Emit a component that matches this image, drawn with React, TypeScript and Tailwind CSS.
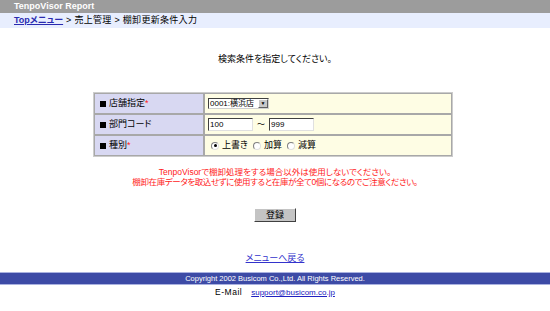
import { useState } from "react";

const jp = "font-['Liberation_Sans','Noto_Sans_CJK_JP',sans-serif] [font-feature-settings:'palt']";

function Radio({ checked, onClick }: { checked: boolean; onClick: () => void }) {
    return (
        <span onClick={onClick} className="w-[8px] h-[8px] rounded-full border border-t-[#808080] border-l-[#808080] border-r-[#e0e0e0] border-b-[#e0e0e0] bg-white flex items-center justify-center cursor-pointer">
            {checked && <span className="w-[3px] h-[3px] rounded-full bg-black" />}
        </span>
    );
}

export default function App() {
    const [mode, setMode] = useState(0);
    const modes = ["上書き", "加算", "減算"];

    return (
        <div className={`w-[550px] h-[311px] bg-white text-black ${jp}`}>
            <div className="h-[13px] bg-[#9c9c9c] pl-[14px] text-white font-bold text-[9px] leading-[13px]">TenpoVisor Report</div>
            <div className="h-[15px] bg-[#e8eefe] pl-[14px] text-[9px] leading-[15px] flex gap-[3px]">
                <a href="#" className="text-[#2a2ab0] underline font-bold">Topメニュー</a>
                <span className="tracking-[0.3px]">&gt; 売上管理 &gt; 棚卸更新条件入力</span>
            </div>

            <p className="mt-[26px] text-center text-[9px] leading-[10px]">検索条件を指定してください。</p>

            <div className="mt-[28px] ml-[93px] w-[360px] border border-[#cccccc] bg-[#a8a8a8] grid grid-cols-[108px_1fr] gap-[2px] p-[1px] text-[9px]">
                <div className="h-[19px] bg-[#d8d8f2] flex items-center pl-[5px] gap-[3px]">
                    <span className="w-[6px] h-[6px] bg-black" />
                    <span>店舗指定<span className="text-[#ff2020]">*</span></span>
                </div>
                <div className="h-[19px] bg-[#fefde4] flex items-center pl-[3px]">
                    <div className="w-[61px] h-[11px] bg-white border border-t-[#404040] border-l-[#404040] border-r-[#d0d0d0] border-b-[#d0d0d0] flex items-center">
                        <span className="flex-1 text-[8px] leading-[9px] pl-[1px] whitespace-nowrap">0001:横浜店</span>
                        <span className="w-[10px] h-[9px] bg-[#c8c8c8] border border-t-white border-l-white border-r-[#606060] border-b-[#606060] flex items-center justify-center text-[5px] leading-none">▼</span>
                    </div>
                </div>

                <div className="h-[19px] bg-[#d8d8f2] flex items-center pl-[5px] gap-[3px]">
                    <span className="w-[6px] h-[6px] bg-black" />
                    <span>部門コード</span>
                </div>
                <div className="h-[19px] bg-[#fefde4] flex items-center pl-[3px] gap-[4px]">
                    <input defaultValue="100" className="w-[45px] h-[13px] bg-white border border-t-[#404040] border-l-[#404040] border-r-[#e0e0e0] border-b-[#e0e0e0] text-[8px] px-[1px] outline-none" />
                    <span className="text-[8px]">～</span>
                    <input defaultValue="999" className="w-[45px] h-[13px] bg-white border border-t-[#404040] border-l-[#404040] border-r-[#e0e0e0] border-b-[#e0e0e0] text-[8px] px-[1px] outline-none" />
                </div>

                <div className="h-[19px] bg-[#d8d8f2] flex items-center pl-[5px] gap-[3px]">
                    <span className="w-[6px] h-[6px] bg-black" />
                    <span>種別<span className="text-[#ff2020]">*</span></span>
                </div>
                <div className="h-[19px] bg-[#fefde4] flex items-center pl-[6px] gap-[5px]">
                    {modes.map((m, i) => (
                        <label key={m} className="flex items-center gap-[3px]">
                            <Radio checked={mode === i} onClick={() => setMode(i)} />
                            <span>{m}</span>
                        </label>
                    ))}
                </div>
            </div>

            <div className="mt-[10px] text-center text-[#ff1a1a] text-[8.5px] leading-[10px]">
                <p>TenpoVisorで棚卸処理をする場合以外は使用しないでください。</p>
                <p className="tracking-[-0.4px]">棚卸在庫データを取込せずに使用すると在庫が全て0個になるのでご注意ください。</p>
            </div>

            <div className="mt-[21px] flex justify-center">
                <button className="w-[42px] h-[14px] bg-[#c4c4c4] border border-t-white border-l-white border-r-[#404040] border-b-[#404040] text-[9px] leading-none">登録</button>
            </div>

            <div className="mt-[31px] text-center text-[9px] leading-[10px]">
                <a href="#" className="text-[#3333cc] underline">メニューへ戻る</a>
            </div>

            <div className="mt-[9px] h-[13px] bg-[#3d4ba6] border-y border-[#aab2e0] text-white text-[7.5px] leading-[11px] text-center">
                Copyright 2002 Busicom Co.,Ltd. All Rights Reserved.
            </div>
            <div className="mt-[2px] flex justify-center gap-[9px] text-[8.5px] leading-[11px]">
                <span className="tracking-[0.5px]">E-Mail</span>
                <a href="#" className="text-[#2020c0] underline text-[8px]">support@busicom.co.jp</a>
            </div>
        </div>
    );
}
